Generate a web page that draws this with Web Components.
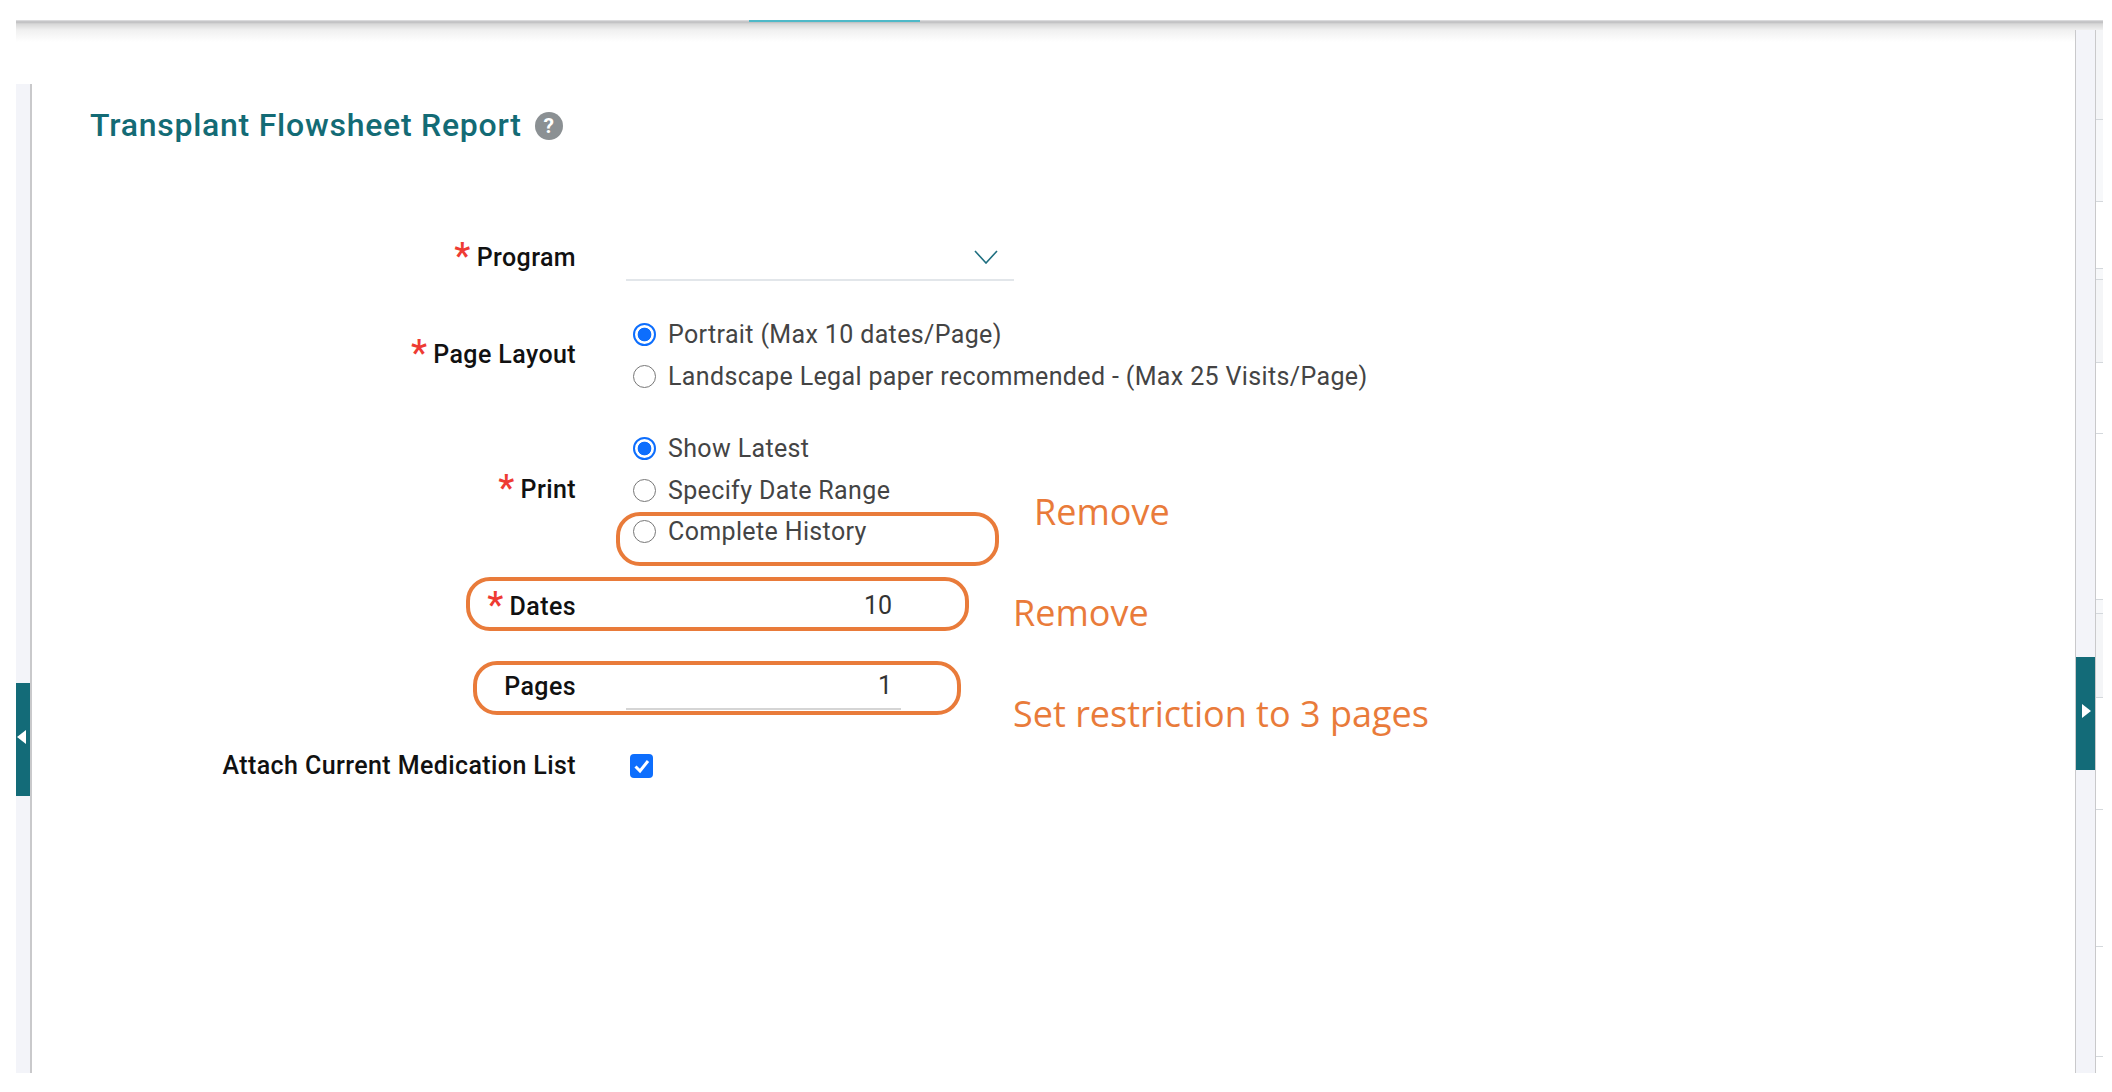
<!DOCTYPE html>
<html>
<head>
<meta charset="utf-8">
<title>Transplant Flowsheet Report</title>
<style>
  body { margin: 0; background: #fff; font-family: Roboto, "Liberation Sans", sans-serif; }
</style>
</head>
<body>
<app-shell>
  <report-form></report-form>
  <mark-ring slot="marks" box="616,512,383,54"></mark-ring>
  <mark-ring slot="marks" box="466,577,503,54"></mark-ring>
  <mark-ring slot="marks" box="473,661,488,54"></mark-ring>
  <mark-note slot="marks" at="1034,512">Remove</mark-note>
  <mark-note slot="marks" at="1013,613">Remove</mark-note>
  <mark-note slot="marks" at="1013,714">Set restriction to 3 pages</mark-note>
</app-shell>

<script>
// small helper so each element only has to hand over its markup
class Base extends HTMLElement {
  constructor() {
    super();
    this.attachShadow({ mode: 'open' });
  }

  connectedCallback() {
    this.shadowRoot.innerHTML = this.markup();
  }
}

class AppShell extends Base {
  markup() {
    return `
      <style>
        :host { display: block; position: relative; width: 2112px; height: 1092px; overflow: hidden; }
        .top {
          height: 10px;
          margin: 20px 9px 0 16px;
          background: linear-gradient(#e4e4e6 0, #bcbcbe 2px, #d8d8d8 4px, #f0f0f0 10px);
        }
        .tab { width: 171px; height: 2px; margin-left: 733px; background: #4fb9c8; }
        .row { display: flex; height: 1043px; margin: 0 9px 0 16px; }
        .content {
          flex: 1;
          display: flex;
          min-width: 0;
          background: linear-gradient(#f0f0f0, #fff) top / 100% 12px no-repeat;
        }
        main { flex: 1; min-width: 0; padding: 75px 0 0 58px; }
        h1 {
          display: flex;
          align-items: center;
          gap: 13px;
          margin: 0;
          height: 40px;
          font-size: 32px;
          font-weight: 500;
          letter-spacing: .75px;
          color: #136b75;
        }
        h1 svg { width: 28px; height: 28px; margin-top: 2px; }
      </style>
      <div class="top"><div class="tab"></div></div>
      <div class="row">
        <div class="content">
          <left-rail></left-rail>
          <main>
            <h1>Transplant Flowsheet Report
              <svg viewBox="0 0 28 28"><circle cx="14" cy="14" r="14" fill="#8b9093"/><text x="14" y="21" text-anchor="middle" font-family="Roboto, sans-serif" font-size="21" font-weight="700" fill="#fff">?</text></svg>
            </h1>
            <slot></slot>
          </main>
        </div>
        <right-rail></right-rail>
      </div>
      <slot name="marks"></slot>
    `;
  }
}

class LeftRail extends Base {
  markup() {
    return `
      <style>
        :host { display: block; width: 14px; margin-top: 54px; background: #f3f4f9; border-right: 2px solid #c9c9cb; }
        .btn {
          display: flex; align-items: center; padding: 0 0 6px 1px; box-sizing: border-box;
          height: 113px; margin-top: 599px; background: #136b78;
        }
        svg { width: 9px; height: 14px; }
      </style>
      <div class="btn"><svg viewBox="0 0 9 14"><path d="M9 0v14L0 7z" fill="#fff"/></svg></div>
    `;
  }
}

class RightRail extends Base {
  markup() {
    // heights of the cut-off table rows showing at the window's right edge
    const rows = [
      [90, '#f4f5f7'], [82, '#f7f8fa'], [67, '#fff'], [11, '#f7f8fa'], [83, '#f4f5f7'],
      [71, '#fff'], [166, '#fff'], [14, '#f7f8fa'], [84, '#f4f5f7'], [112, '#fff'],
      [137, '#fff'], [110, '#fff'],
    ];
    const segs = rows
      .map(([h, bg]) => `<div class="seg" style="height:${h}px;background:${bg}"></div>`)
      .join('');
    return `
      <style>
        :host { display: flex; }
        .rail {
          box-sizing: border-box;
          width: 21px;
          background: #f3f4f9;
          border-left: 1px solid #c9c9cb;
          border-right: 1px solid #c9c9cb;
        }
        .btn {
          display: flex; align-items: center; padding: 0 0 5px 6px; box-sizing: border-box;
          height: 113px; margin-top: 627px; background: #136b78;
        }
        svg { width: 9px; height: 14px; }
        .side { width: 7px; }
        .seg { box-sizing: border-box; border-bottom: 1px solid #d4d8dc; }
      </style>
      <div class="rail">
        <div class="btn"><svg viewBox="0 0 9 14"><path d="M0 0v14L9 7z" fill="#fff"/></svg></div>
      </div>
      <div class="side">${segs}</div>
    `;
  }
}

class ReportForm extends Base {
  markup() {
    return `
      <style>
        :host { display: block; margin-left: -58px; }
      </style>
      <form-row label="Program" required gap="89">
        <select-box></select-box>
      </form-row>
      <form-row label="Page Layout" required gap="32">
        <radio-opt checked>Portrait (Max 10 dates/Page)</radio-opt>
        <radio-opt>Landscape Legal paper recommended - (Max 25 Visits/Page)</radio-opt>
      </form-row>
      <form-row label="Print" required gap="30">
        <radio-opt checked>Show Latest</radio-opt>
        <radio-opt>Specify Date Range</radio-opt>
        <radio-opt class="last">Complete History</radio-opt>
      </form-row>
      <form-row label="Dates" required gap="32">
        <num-field value="10" width="266"></num-field>
      </form-row>
      <form-row label="Pages" gap="34">
        <num-field value="1" width="275" pad="9" underline></num-field>
      </form-row>
      <form-row label="Attach Current Medication List" gap="34">
        <check-box></check-box>
      </form-row>
    `;
  }
}

class FormRow extends Base {
  markup() {
    const star = this.hasAttribute('required') ? '<span class="star">*</span>' : '';
    return `
      <style>
        :host {
          display: grid;
          grid-template-columns: 544px 1fr;
          column-gap: 50px;
          align-items: center;
          margin-top: ${this.getAttribute('gap')}px;
        }
        label {
          display: flex;
          justify-content: flex-end;
          align-items: center;
          font-size: 25px;
          font-weight: 500;
          letter-spacing: .4px;
          color: #111;
          white-space: nowrap;
          margin-top: -1px;
        }
        .star { color: #ee3b33; font-size: 36px; line-height: 24px; margin: -3px 6px 0 0; height: 24px; }
        ::slotted(.last) { margin-top: -1px; }
      </style>
      <label>${star}${this.getAttribute('label')}</label>
      <div><slot></slot></div>
    `;
  }
}

class SelectBox extends Base {
  markup() {
    return `
      <style>
        :host {
          display: flex; justify-content: flex-end; align-items: center; box-sizing: border-box;
          width: 388px; height: 47px; padding-right: 16px; border-bottom: 2px solid #e2e6ea;
        }
        svg { width: 24px; height: 14px; }
      </style>
      <svg viewBox="0 0 24 14"><path d="M1 1l11 12L23 1" fill="none" stroke="#1f6f80" stroke-width="1.6"/></svg>
    `;
  }
}

class RadioOpt extends Base {
  markup() {
    const on = this.hasAttribute('checked');
    return `
      <style>
        :host {
          display: flex; align-items: center; gap: 12px; height: 42px; padding-left: 7px;
          font-size: 25px; letter-spacing: .36px; color: #444; white-space: nowrap;
        }
        i {
          box-sizing: border-box; width: 23px; height: 23px; border-radius: 50%; flex: none;
          border: ${on ? '2px solid #0d6efd' : '1.5px solid #777'};
          background: ${on ? 'radial-gradient(circle, #0d6efd 0 6.5px, #fff 7.2px)' : '#fff'};
        }
      </style>
      <i></i><span><slot></slot></span>
    `;
  }
}

class NumField extends Base {
  markup() {
    const line = this.hasAttribute('underline') ? '#d5d5d5' : 'transparent';
    return `
      <style>
        :host {
          display: block; box-sizing: border-box; text-align: right;
          width: ${this.getAttribute('width')}px; height: 46px; line-height: 44px;
          padding-right: ${this.getAttribute('pad') || 0}px;
          font-size: 25px; color: #333;
          border-bottom: 2px solid ${line};
        }
      </style>
      ${this.getAttribute('value')}
    `;
  }
}

class CheckBox extends Base {
  markup() {
    return `
      <style>
        :host { display: flex; height: 44px; align-items: center; padding-left: 4px; }
        svg { width: 23px; height: 24px; }
      </style>
      <svg viewBox="0 0 23 24"><rect width="23" height="24" rx="4" fill="#0d6efd"/><path d="M5.5 12.5l4.5 4.5L18 7" fill="none" stroke="#fff" stroke-width="3"/></svg>
    `;
  }
}

// hand-drawn review marks lying on top of the form
class MarkRing extends Base {
  markup() {
    const [x, y, w, h] = this.getAttribute('box').split(',');
    return `
      <style>
        :host {
          position: absolute; box-sizing: border-box;
          left: ${x}px; top: ${y}px; width: ${w}px; height: ${h}px;
          border: 4px solid #e97b3a; border-radius: 24px;
          pointer-events: none;
        }
      </style>
    `;
  }
}

class MarkNote extends Base {
  markup() {
    const [x, y] = this.getAttribute('at').split(',');
    return `
      <style>
        :host {
          position: absolute; left: ${x}px; top: ${y - 25}px; height: 50px; line-height: 50px;
          font-family: "Open Sans", sans-serif; font-size: 36px; font-weight: 500; color: #e97b3a; white-space: nowrap;
        }
      </style>
      <slot></slot>
    `;
  }
}

customElements.define('app-shell', AppShell);
customElements.define('left-rail', LeftRail);
customElements.define('right-rail', RightRail);
customElements.define('report-form', ReportForm);
customElements.define('form-row', FormRow);
customElements.define('select-box', SelectBox);
customElements.define('radio-opt', RadioOpt);
customElements.define('num-field', NumField);
customElements.define('check-box', CheckBox);
customElements.define('mark-ring', MarkRing);
customElements.define('mark-note', MarkNote);
</script>
</body>
</html>
